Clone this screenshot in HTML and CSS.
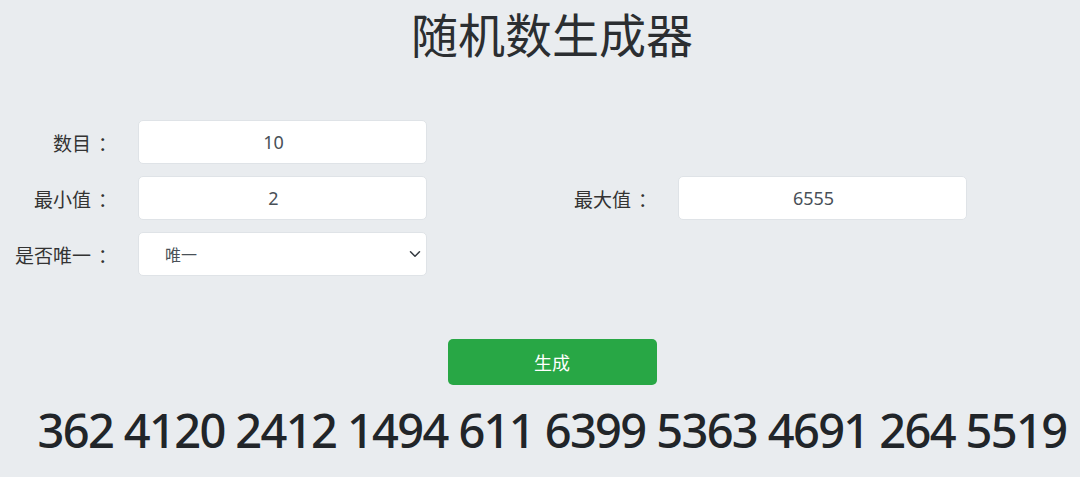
FILE: index.html
```html
<!DOCTYPE html>
<html lang="zh-CN">
<head>
    <meta charset="UTF-8">
    <title>随机数生成器</title>
    <link rel="stylesheet" href="styles.css">
</head>
<body>
    <div class="page">
        <h1 class="title">随机数生成器</h1>

        <form class="gen-form">
            <div class="form-row">
                <div class="field">
                    <label for="count">数目<span class="colon">：</span></label>
                    <input type="text" id="count" value="10">
                </div>
            </div>
            <div class="form-row">
                <div class="field">
                    <label for="min">最小值<span class="colon">：</span></label>
                    <input type="text" id="min" value="2">
                </div>
                <div class="field">
                    <label for="max">最大值<span class="colon">：</span></label>
                    <input type="text" id="max" value="6555">
                </div>
            </div>
            <div class="form-row">
                <div class="field">
                    <label for="unique">是否唯一<span class="colon">：</span></label>
                    <div class="select-wrap">
                        <select id="unique">
                            <option>唯一</option>
                            <option>不唯一</option>
                        </select>
                        <svg class="chevron" width="12" height="12" viewBox="0 0 16 16"><path d="M2 5l6 6 6-6" fill="none" stroke="#343a40" stroke-width="2" stroke-linecap="round" stroke-linejoin="round"/></svg>
                    </div>
                </div>
            </div>
        </form>

        <div class="actions">
            <button type="button" class="btn-generate">生成</button>
        </div>

        <div class="result">362 4120 2412 1494 611 6399 5363 4691 264 5519</div>
    </div>
</body>
</html>
```

FILE: styles.css
```css
:root {
    --bg: #e9ecef;
    --text: #212529;
    --label: #333;
    --input-text: #495057;
    --border: #dfe3e7;
    --green: #28a745;
}

body {
    margin: 0;
    background-color: var(--bg);
    color: var(--text);
    font-family: "Noto Sans", "Noto Sans CJK SC", sans-serif;
}

.page { width: 1080px; }

.title {
    margin: 0;
    padding: 0 0 0 24px;
    text-align: center;
    font-family: "Noto Sans CJK SC", sans-serif;
    font-size: 47px;
    font-weight: 400;
    line-height: 66px;
    height: 64px;
    color: #2b2e31;
}

/* форма */
.gen-form {
    margin-top: 56px;
    display: flex;
    flex-direction: column;
    gap: 12px;
}
.form-row { display: grid; grid-template-columns: 540px 540px; }
.field { display: flex; align-items: center; gap: 21px; }
.field label {
    width: 117px;
    text-align: right;
    white-space: nowrap;
    font-family: "Noto Sans CJK SC", sans-serif;
    font-size: 19px;
    color: var(--label);
}
.field label .colon { margin-left: 7px; }
.field input, .field select {
    width: 289px;
    height: 44px;
    box-sizing: border-box;
    border: 1px solid var(--border);
    border-radius: 5px;
    background: #fff;
    font-family: "Noto Sans", "Noto Sans CJK SC", sans-serif;
    font-size: 18px;
    color: var(--input-text);
    outline: none;
}
.field input { text-align: center; padding: 0 18px 0 0; }

.select-wrap { position: relative; }
.field select {
    appearance: none;
    padding-left: 26px;
    font-family: "Noto Sans CJK SC", sans-serif;
    font-size: 16px;
}
.chevron { position: absolute; right: 6px; top: 16px; pointer-events: none; }

.actions { display: flex; justify-content: center; margin-top: 63px; padding-left: 24px; }
.btn-generate {
    width: 209px;
    height: 46px;
    border: none;
    border-radius: 5px;
    background-color: var(--green);
    color: #fff;
    font-family: "Noto Sans CJK SC", sans-serif;
    font-size: 18px;
}

.result {
    margin-top: 15px;
    padding-left: 24px;
    text-align: center;
    white-space: nowrap;
    font-family: "Noto Sans", sans-serif;
    font-size: 47px;
    font-weight: 500;
    letter-spacing: -1.65px;
    line-height: 60px;
    color: var(--text);
}
```
